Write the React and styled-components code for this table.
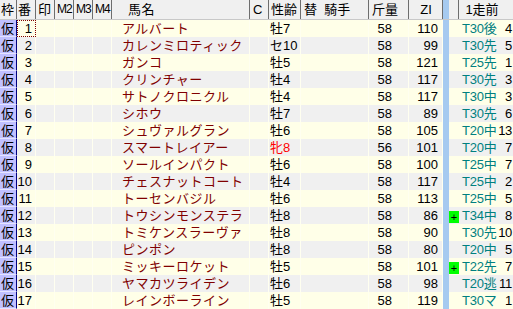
import React from "react"
import styled, { createGlobalStyle, css } from "styled-components"

const GlobalStyle = createGlobalStyle`
  html, body {
    margin: 0;
    padding: 0;
    background: #ffffe8;
  }
  body {
    font-family: "Liberation Sans", "Noto Sans CJK JP", sans-serif;
    font-size: 13px;
  }
`

const COLUMNS =
  "17px 19px 19px 19px 19px 19px 138px 19px 32px 68px 40px 34px 6px 10px 54px"

const horses = [
  { no: 1, name: "アルバート", sa: "牡7", w: 58, zi: 110, prev: "T30後", pos: 4 },
  { no: 2, name: "カレンミロティック", sa: "セ10", w: 58, zi: 99, prev: "T30先", pos: 5 },
  { no: 3, name: "ガンコ", sa: "牡5", w: 58, zi: 121, prev: "T25先", pos: 1 },
  { no: 4, name: "クリンチャー", sa: "牡4", w: 58, zi: 117, prev: "T30先", pos: 3 },
  { no: 5, name: "サトノクロニクル", sa: "牡4", w: 58, zi: 117, prev: "T30中", pos: 3 },
  { no: 6, name: "シホウ", sa: "牡7", w: 58, zi: 89, prev: "T30先", pos: 6 },
  { no: 7, name: "シュヴァルグラン", sa: "牡6", w: 58, zi: 105, prev: "T20中", pos: 13 },
  { no: 8, name: "スマートレイアー", sa: "牝8", w: 56, zi: 101, prev: "T20中", pos: 7 },
  { no: 9, name: "ソールインパクト", sa: "牡6", w: 58, zi: 100, prev: "T25中", pos: 7 },
  { no: 10, name: "チェスナットコート", sa: "牡4", w: 58, zi: 117, prev: "T25中", pos: 2 },
  { no: 11, name: "トーセンバジル", sa: "牡6", w: 58, zi: 113, prev: "T25中", pos: 5 },
  { no: 12, name: "トウシンモンステラ", sa: "牡8", w: 58, zi: 86, prev: "T34中", pos: 8, plus: true },
  { no: 13, name: "トミケンスラーヴァ", sa: "牡8", w: 58, zi: 90, prev: "T30先", pos: 10 },
  { no: 14, name: "ピンポン", sa: "牡8", w: 58, zi: 80, prev: "T20中", pos: 5 },
  { no: 15, name: "ミッキーロケット", sa: "牡5", w: 58, zi: 101, prev: "T22先", pos: 7, plus: true },
  { no: 16, name: "ヤマカツライデン", sa: "牡6", w: 58, zi: 98, prev: "T20逃", pos: 11 },
  { no: 17, name: "レインボーライン", sa: "牡5", w: 58, zi: 119, prev: "T30マ", pos: 1 },
]

const Sheet = styled.div`
  width: 513px;
  height: 309px;
  overflow: hidden;
  background: #ffffe8;
  color: #000;
`

const HeaderRow = styled.div`
  display: grid;
  grid-template-columns: ${COLUMNS};
  height: 20px;
  background: #f0f0f0;
  border-bottom: 1px solid #c8c8c8;
  box-sizing: border-box;
`

const HeadCell = styled.div`
  display: flex;
  align-items: center;
  justify-content: ${({ $align }) => $align || "flex-start"};
  padding-left: ${({ $pad }) => $pad ?? 1}px;
  padding-right: ${({ $padRight }) => $padRight ?? 0}px;
  border-right: ${({ $last }) => ($last ? "none" : "1px solid #6e6e6e")};
  white-space: nowrap;
  overflow: hidden;
  line-height: 19px;
  letter-spacing: ${({ $spaced }) => ($spaced ? "0.5px" : "0")};
`

const MarkHead = styled(HeadCell)`
  font-size: 12px;
  letter-spacing: -1px;
  padding-left: 2px;
`

const Row = styled.div`
  display: grid;
  grid-template-columns: ${COLUMNS};
  height: 17px;
  background: ${({ $odd }) => ($odd ? "#ffffe8" : "#f0f0f0")};
`

const Cell = styled.div`
  display: flex;
  align-items: center;
  border-right: 1px solid #fffff0;
  white-space: nowrap;
  overflow: hidden;
  line-height: 17px;
  box-sizing: border-box;
`

const FrameCell = styled(Cell)`
  background: #c0c0ff;
  border-right: 1px solid #000080;
  border-bottom: 1px solid #e4e4ff;
  padding-left: 1px;
`

const NumCell = styled(Cell)`
  justify-content: flex-end;
  padding-right: 3px;
  ${({ $focus }) =>
    $focus &&
    css`
      outline: 1px dotted #800000;
      outline-offset: -1px;
    `}
`

const NameCell = styled(Cell)`
  padding-left: 10px;
  color: #800000;
  letter-spacing: 0.5px;
`

const SexCell = styled(Cell)`
  padding-left: 1px;
  color: ${({ $mare }) => ($mare ? "#ff0000" : "#000")};
`

const RightCell = styled(Cell)`
  justify-content: flex-end;
  padding-right: ${({ $pad }) => $pad}px;
`

const Bar = styled.div`
  background: #a6caf0;
`

const PlusCell = styled(Cell)`
  align-items: flex-end;
  padding-bottom: 1px;
  border-right: none;
`

const PlusBadge = styled.span`
  display: flex;
  align-items: center;
  justify-content: center;
  width: 10px;
  height: 12px;
  background: #00ff00;
  font-size: 11px;
  line-height: 12px;
`

const PrevCell = styled(Cell)`
  justify-content: space-between;
  padding-left: 3px;
  padding-right: 1px;
  border-right: none;
`

const Course = styled.span`
  color: #008080;
  letter-spacing: -0.2px;
`

const Place = styled.span`
  color: #000;
  letter-spacing: -0.3px;
`

const Header = () => (
  <HeaderRow>
    <HeadCell>枠</HeadCell>
    <HeadCell>番</HeadCell>
    <HeadCell $pad={2}>印</HeadCell>
    <MarkHead>M2</MarkHead>
    <MarkHead>M3</MarkHead>
    <MarkHead>M4</MarkHead>
    <HeadCell $pad={16} $spaced>
      馬名
    </HeadCell>
    <HeadCell $pad={3}>C</HeadCell>
    <HeadCell $pad={2}>性齢</HeadCell>
    <HeadCell $pad={3}>替&nbsp;&nbsp;騎手</HeadCell>
    <HeadCell $pad={3}>斤量</HeadCell>
    <HeadCell $align="center">ZI</HeadCell>
    <Bar />
    <HeadCell />
    <HeadCell $align="center" $pad={0} $padRight={8} $last>
      1走前
    </HeadCell>
  </HeaderRow>
)

const HorseRow = ({ horse }) => (
  <Row $odd={horse.no % 2 === 1}>
    <FrameCell>仮</FrameCell>
    <NumCell $focus={horse.no === 1}>{horse.no}</NumCell>
    <Cell />
    <Cell />
    <Cell />
    <Cell />
    <NameCell>{horse.name}</NameCell>
    <Cell />
    <SexCell $mare={horse.sa.startsWith("牝")}>{horse.sa}</SexCell>
    <Cell />
    <RightCell $pad={16}>{horse.w}</RightCell>
    <RightCell $pad={4}>{horse.zi}</RightCell>
    <Bar />
    <PlusCell>{horse.plus && <PlusBadge>+</PlusBadge>}</PlusCell>
    <PrevCell>
      <Course>{horse.prev}</Course>
      <Place>{horse.pos}</Place>
    </PrevCell>
  </Row>
)

const App = () => (
  <>
    <GlobalStyle />
    <Sheet>
      <Header />
      {horses.map(h => (
        <HorseRow key={h.no} horse={h} />
      ))}
    </Sheet>
  </>
)

export default App
